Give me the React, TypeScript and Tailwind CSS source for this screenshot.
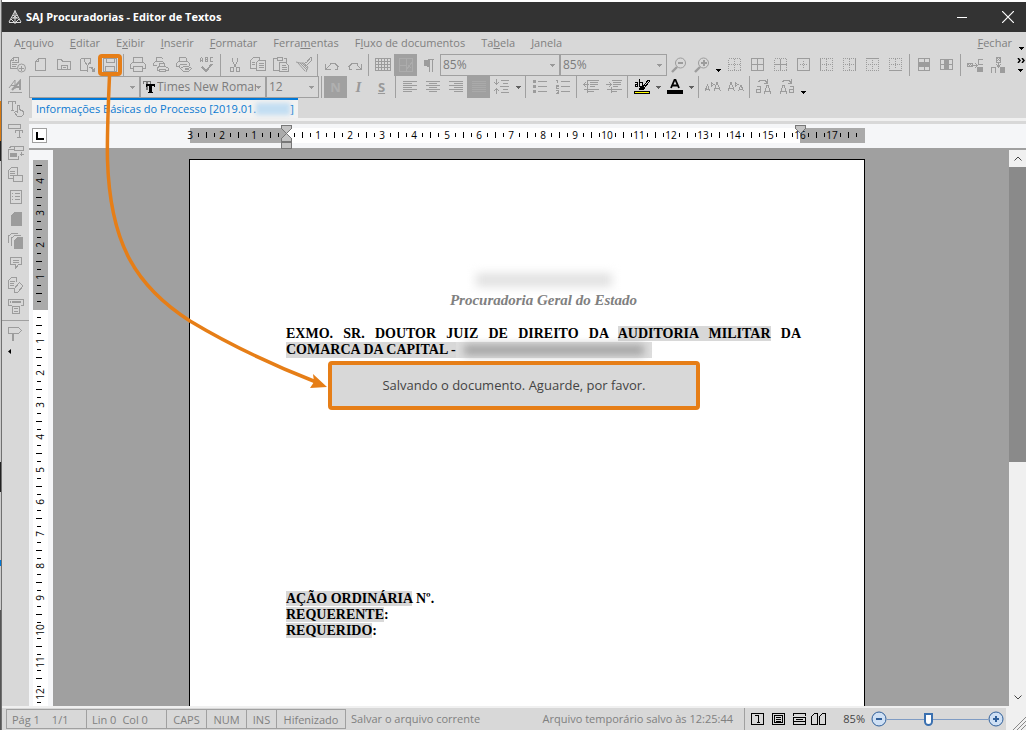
import type { ReactNode } from "react";

/* Toolbar glyphs, all on a 16 x 16 grid */
const glyphs: Record<string, ReactNode> = {
  newFrom: (
    <>
      <path d="M7 11.5H.5v-8l3-3h5v5M3.5 .5v3h-3M5 3.5h2M2 5.5h6M2 7.5h5M2 9.5h4" />
      <circle cx="11.5" cy="11" r="4" shapeRendering="auto" />
      <path d="M9 11.5h5M11.5 9v5" />
    </>
  ),
  page: <path d="M5.5 1.5h7v12h-10v-9zM5.5 1.5v3h-3" />,
  open: <path d="M1.5 12.5v-10h4l1 2h8v8h-3v-4h-6v4zM5 12.5h7M7 10.5h3" />,
  filter: <path d="M1.5 1.5h4v3l3 4v6M1.5 1.5v12h7M5.5 1.5h6v5M8.5 8.5l3-4M10 10.5h3v3M12.5 11l3 3M15.5 11v3h-3" />,
  save: <path d="M1.5 1.5h13v13h-13zM4.5 1.5v4h8v-4M3.5 14.5v-5h9v5" />,
  print: <path d="M3.5 5.5v-5h9v5M3.5 11.5h-3v-4l2-2h11l2 2v4h-3M3.5 9.5h9v5h-9z" />,
  printPage: <path d="M3.5 4.5v-4h5l2 2M3.5 8.5h-3v-2l2-2h7l2 2M6.5 9.5v-3h5v3M6.5 13.5h-2v-3l2-1h6l3 2v2h-3M6.5 12.5h6v2h-6z" />,
  printView: (
    <>
      <path d="M3.5 4.5v-4h6l1 1v3M3.5 9.5h-3v-3l2-2h9l2 2v2M3.5 7.5h7M3.5 7.5v3" />
      <path d="M4.5 11.5l3-2h5l3 2-3 3h-5zM9 11.5h3v1H9z" />
    </>
  ),
  spell: (
    <>
      <path d="M1.5 5V1.5l1-1 1 1V5M1.5 3.5h2M6.5 5V.5h2v4h-2M6.5 2.5h2M13.5 .5h-2v4h2" />
      <path d="M3 10l4 4 6-7" strokeWidth="2" />
    </>
  ),
  cut: <path d="M5.5 .5v4l4 6M10.5 .5v4l-4 6M3.5 10.5h3v4h-3zM9.5 10.5h3v4h-3z" />,
  copy: <path d="M6.5 11.5h-6v-8l3-3h6v2M2 5.5h3M2 7.5h3M6.5 5.5l2-2h7v10h-9zM8.5 6.5h5M8.5 8.5h5M8.5 10.5h5" />,
  paste: <path d="M6.5 13.5h-6v-12h4M10.5 1.5h3v4M4.5 .5h5v3h-5zM6.5 5.5h6l3 3v6h-9zM8.5 8.5h4M8.5 10.5h5M8.5 12.5h5" />,
  brush: (
    <>
      <path d="M0 5l4 1 4 0 4 4-2 5M2 6l7 8M4 6l7 7M6 6l5 5M8 6l2 3 3-3" shapeRendering="auto" />
      <path d="M8.500 5.500h2l4-5h1v3l-4 4" />
    </>
  ),
  undo: <path d="M1.5 7v5.5H7M2 12l4-4V6.500h5l3 3-1 3h-2" />,
  redo: <path d="M14.5 7v5.5H9M14 12l-4-4V6.500H5l-3 3 1 3h2" />,
  grid: <path d="M.5 1.5h15v12H.5zM.5 4.5h15M.5 7.5h15M.5 10.5h15M3.5 1.5v12M6.5 1.5v12M9.5 1.5v12M12.5 1.5v12" />,
  gridEdit: <path d="M1.5 1.5h13v13h-13zM1.5 8.5h7M8.5 1.5v13M9 12l5-7M10 8l3 3" stroke="#acacac" />,
  pilcrow: (
    <>
      <path d="M8 3H6a3 3 0 000 6h2z" fill="currentColor" />
      <path d="M8.5 2.5v12M11.5 2.5v12M7 2.5h6" />
    </>
  ),
  zoomOut: (
    <>
      <circle cx="9.5" cy="6" r="5" shapeRendering="auto" />
      <path d="M6 10l-5 5" strokeWidth="2.4" shapeRendering="auto" />
      <path d="M7 6h5" strokeWidth="2" />
    </>
  ),
  zoomIn: (
    <>
      <circle cx="9.5" cy="6" r="5" shapeRendering="auto" />
      <path d="M6 10l-5 5" strokeWidth="2.4" shapeRendering="auto" />
      <path d="M7 6h6M10 3v6" strokeWidth="2" />
    </>
  ),
  borderNone: <path d="M1.5 1.5h12v12h-12zM1.5 7.5h12M7.5 1.5v12" strokeDasharray="1 1" />,
  borderAll: <path d="M1.5 1.5h12v12h-12zM1.5 7.5h12M7.5 1.5v12" />,
  borderInner: (
    <>
      <path d="M1.5 1.5h12v12h-12z" strokeDasharray="1 1" />
      <path d="M1.5 7.5h12M7.5 1.5v12" />
    </>
  ),
  borderOuter: (
    <>
      <path d="M1.5 1.5h12v12h-12z" />
      <path d="M4 7.5h8M7.5 4v8" strokeDasharray="1 1" />
    </>
  ),
  borderLeft: (
    <>
      <path d="M3 1.5h10.5v12H3M3 7.5h10M7.5 2v12" strokeDasharray="1 1" />
      <path d="M1.5 1v13" />
    </>
  ),
  borderRight: (
    <>
      <path d="M12 1.5H1.5v12H12M1 7.5h11M7.5 2v12" strokeDasharray="1 1" />
      <path d="M13.5 1v13" />
    </>
  ),
  borderTop: (
    <>
      <path d="M1.5 3v10.5h12V3M1 7.5h12M7.5 3v11" strokeDasharray="1 1" />
      <path d="M1 1.5h13" />
    </>
  ),
  borderBottom: (
    <>
      <path d="M1.5 12V1.5h12V12M1 7.5h12M7.5 2v10" strokeDasharray="1 1" />
      <path d="M1 13.5h13" />
    </>
  ),
  rows: (
    <>
      <path d="M2.5 1.5h11v12h-11zM8.5 1v4M8.5 10v4" />
      <path d="M2 5h12v5H2z" fill="currentColor" stroke="none" />
    </>
  ),
  columns: (
    <>
      <path d="M1.5 2.5h12v10h-12zM1 7.5h4M10 7.5h4" />
      <path d="M5 2h5v11H5z" fill="currentColor" stroke="none" />
    </>
  ),
  nodeRight: (
    <>
      <path d="M.5 6.5h5v3h-5zM5 8.5h5M8 6l2 2.5L8 11M15.5 2.5h-4v5h4" />
      <path d="M1 7h1v1H1zM3 7h1v1H3zM2 8h1v1H2zM4 8h1v1H4zM10 10h6v5h-6z" fill="currentColor" stroke="none" />
    </>
  ),
  nodeDown: (
    <>
      <path d="M6.5 .5h4v5h-4zM8.5 5v5M6 7l2.5 3L11 7M1.5 15.500v-5h4v5" />
      <path d="M7 1h1v1H7zM9 1h1v1H9zM8 2h1v1H8zM7 3h1v1H7zM9 3h1v1H9zM10 10h5v6h-5z" fill="currentColor" stroke="none" />
    </>
  ),
  alignLeft: <path d="M1 2.5h14M1 4.5h9M1 6.5h14M1 8.5h9M1 10.5h14M1 12.5h9" />,
  alignCenter: <path d="M1 2.5h14M4 4.5h8M1 6.5h14M4 8.5h8M1 10.5h14M4 12.5h8" />,
  alignRight: <path d="M1 2.5h14M6 4.5h9M1 6.5h14M6 8.5h9M1 10.5h14M6 12.5h9" />,
  justify: <path d="M1 2.5h14M1 4.5h14M1 6.5h14M1 8.5h14M1 10.5h14M1 12.5h14" stroke="#aaa" />,
  spacing: <path d="M2.5 0v5M0 3l2.5 2L5 3M2.5 15v-5M0 12l2.5-2L5 12M7 1.5h8M9 4.5h5M6 7.5h9M9 10.5h5M7 13.5h8" />,
  bullets: (
    <>
      <path d="M1 1h3v3H1zM1 6h3v3H1zM1 11h3v3H1z" fill="currentColor" stroke="none" />
      <path d="M6 2.5h9M6 7.5h9M6 12.5h9" />
    </>
  ),
  numbers: <path d="M1 1.5h1.5V4M1 6h2v1.5H1.5V9H4M1 11.5h2v3H1M3 13H2M6 2.5h9M6 7.5h9M6 12.5h9" />,
  outdent: <path d="M0 5.5h6M3 3L.5 5.5 3 8M5 1.5h11M7 3.500h8M7 5.500h8M7 7.500h5M1 10.500h15M5 12.500h6M4.500 1v13" />,
  indent: <path d="M0 5.5h6M3 3l2.500 2.500L3 8M6 1.5h10M7 3.500h8M7 5.500h8M7 7.500h5M1 10.500h15M5 12.500h6M5.500 8v6" />,
  highlight: (
    <g stroke="#000">
      <path d="M1 3.5h2.5V7h-2V5.5h2M5.5 0v7h3V3.5h-3M9 8l5-7h1.500v1.500l-5 6" />
      <path d="M5 10l4-3 2 2-3 2z" fill="#000" />
      <path d="M.5 12.5h15v2H.5z" fill="#ff0" />
    </g>
  ),
  fontColor: (
    <>
      <path d="M4 9l3.5-8h1L12 9M5.5 6.5h5" stroke="#000" strokeWidth="1.8" shapeRendering="auto" />
      <path d="M0 11h16v4H0z" fill="#000" stroke="none" />
    </>
  ),
  grow: <path d="M0 12l2.500-6L5 12M1 10h3M6 3.5l3 2-3 2zM9 12l3-9 3.5 9M10 9h4" />,
  shrink: <path d="M0 12l3-9 3.5 9M1 9h4M7 3.5l3 2-3 2zM10.5 12L13 6l2.500 6M11 10h4" />,
  lower: <path d="M1 7.5h3.5V13h-4v-3h4M2 3l3-2h4l2 3M11.5 0v4.500H8M8 15l3-9h1l3 9M9 12h5" />,
  upper: <path d="M1 15l3-9h1l3 9M2 12h5M3 3l3-2h4l2 3M12.5 0v4.500H9M10.5 7.5H14V13h-4v-3h4" />,
  style: (
    <>
      <path d="M1 9l6-8v9M3 6.500h4" shapeRendering="auto" />
      <path d="M4 11l8-9v9M7 8h5" strokeWidth="2" shapeRendering="auto" />
      <path d="M2 13.500h12" />
    </>
  ),
  textHand: <path d="M.5 3V.5h7V3M4.5 1v8M3 9.5h3M9.5 11V4.500h2v4l4 2v3l-2 2h-4l-3-4 1-1z" />,
  textBox: <path d="M.5 1.5h12v4H.5zM7.5 10V7.500h7V10M11.5 8v6M9 14.5h4" />,
  fields: (
    <>
      <path d="M5.5 4.5h-5v10h10v-4M6.500 1.5h9v4h-9zM5.5 1.5h-3l-1 2M13.5 7v4M11.500 9.500h4" />
      <path d="M2 8h7v4H2z" fill="currentColor" stroke="none" />
    </>
  ),
  copyDoc: <path d="M4.5 11.5h-4v-8l3-3h6v7M2 4.5h5M2 6.5h5M2 8.5h3M5.5 8.5h9v6h-9z" />,
  list: <path d="M2.5 1.5h11v13h-11zM4 4.5h1M7 4.5h5M4 7.5h1M7 7.5h5M4 10.5h1M7 10.5h5" />,
  solid: <path d="M6 1h8v14H3V4z" fill="currentColor" stroke="none" />,
  solids: (
    <>
      <path d="M.5 10V3l3-2.500h6M3.5 13V5l3-2.500h6" />
      <path d="M9 4h6v12H6V7z" fill="currentColor" stroke="none" />
    </>
  ),
  comment: <path d="M2.5 2.5h11v7h-3l-3 4v-4h-5zM5 5.5h6M5 7.5h6" />,
  editDoc: <path d="M5.5 11.5h-5v-8l3-3h5v4M2 4.5h5M2 6.5h4M2 8.5h4M6.5 11.500l5-6 3.500 3.500-5 6H6.500z" />,
  template: (
    <>
      <path d="M3.5 6.5h-3v-6h15v6h-3M4.5 7.5h7v7h-7zM6 9.5h4M6 12.5h4" />
      <path d="M2 3h1M4 3h9" strokeWidth="2" />
    </>
  ),
  sign: <path d="M.5 1.5h10l3 3-3 3h-10zM4.5 8v7M5.500 8v7" />,
};

function Glyph({ name }: { name: string }) {
  return (
    <svg viewBox="0 0 16 16" className="size-4 shrink-0" fill="none" stroke="currentColor" shapeRendering="crispEdges" aria-hidden="true">
      {glyphs[name]}
    </svg>
  );
}

function Tool({ name, pressed }: { name: string; pressed?: boolean }) {
  return (
    <button
      type="button"
      aria-label={name}
      className={
        pressed
          ? "flex w-[23px] h-[22px] shrink-0 items-center justify-center bg-[#a0a0a0] text-[#b0b0b0]"
          : "flex w-[23px] h-[22px] shrink-0 items-center justify-center text-[#9c9c9c]"
      }
    >
      <Glyph name={name} />
    </button>
  );
}

function Separator() {
  return (
    <div className="flex w-[5px] shrink-0 justify-center">
      <div className="h-[22px] w-px bg-[#a0a0a0]" />
    </div>
  );
}

function Arrow({ dark }: { dark?: boolean }) {
  return (
    <button
      type="button"
      aria-label="Mais opções"
      className={dark ? "flex h-[22px] w-[10px] shrink-0 items-end justify-center pb-1" : "flex h-[22px] w-[10px] shrink-0 items-center justify-center"}
    >
      <svg viewBox="0 0 5 3" className="h-[3px] w-[5px]" shapeRendering="crispEdges">
        <path d="M0 0h5L2.5 3z" fill={dark ? "#000" : "#606060"} />
      </svg>
    </button>
  );
}

function Combo({ label, value, width, icon }: { label: string; value: string; width: string; icon?: boolean }) {
  return (
    <div className={`${width} flex h-[22px] shrink-0 items-center border border-[#a0a0a0] pr-1`}>
      {icon && (
        <svg viewBox="0 0 12 12" className="ml-[2px] size-3 shrink-0" shapeRendering="crispEdges">
          <path d="M0 0h8v3H7V1H5v8H3V1H1v2H0z" fill="#777" />
          <path d="M3 3h9v3h-1V5H9v6h1v1H5v-1h1V5H4v1H3z" fill="#000" />
        </svg>
      )}
      <select aria-label={label} className="min-w-0 flex-1 appearance-none overflow-hidden bg-transparent pl-[2px] text-[12px] leading-5 text-clip text-[#7c7c7c] outline-none">
        <option>{value}</option>
      </select>
      <svg viewBox="0 0 5 3" className="h-[3px] w-[5px] shrink-0" shapeRendering="crispEdges">
        <path d="M0 0h5L2.5 3z" fill="#999" />
      </svg>
    </div>
  );
}

const menus = [
  ["A", "r", "quivo"],
  ["", "E", "ditar"],
  ["E", "x", "ibir"],
  ["", "I", "nserir"],
  ["", "F", "ormatar"],
  ["Ferra", "m", "entas"],
  ["F", "l", "uxo de documentos"],
  ["Ta", "b", "ela"],
  ["", "J", "anela"],
];

const sideTools = ["style", "textHand", "textBox", "fields", "copyDoc", "list", "solid", "solids", "comment", "editDoc", "template"];

const CM = 32.1;

/* Quarter-centimetre ticks plus a number on each whole centimetre */
function RulerMarks({ from, to, origin, vertical }: { from: number; to: number; origin: number; vertical?: boolean }) {
  const marks: ReactNode[] = [];
  for (let q = from; q <= to; q++) {
    const at = Math.round(origin + (q * CM) / 4);
    if (q === 0) continue;
    if (q % 4 === 0) {
      marks.push(
        <text
          key={q}
          x={vertical ? 0 : at}
          y={vertical ? 0 : 11}
          transform={vertical ? `translate(11 ${at}) rotate(-90)` : undefined}
          textAnchor="middle"
          fontSize="10"
          fill="#000"
        >
          {Math.abs(q / 4)}
        </text>,
      );
      continue;
    }
    const long = q % 2 === 0;
    marks.push(
      vertical ? (
        <rect key={q} x={long ? 3 : 4} y={at} width={long ? 6 : 4} height="1" />
      ) : (
        <rect key={q} x={at} y={long ? 4 : 5} width="1" height={long ? 6 : 4} />
      ),
    );
  }
  return <g shapeRendering="crispEdges">{marks}</g>;
}

function HorizontalRuler() {
  return (
    <svg viewBox="0 0 680 25" className="h-[25px] w-[680px] shrink-0">
      <path d="M5 4h675v15H5z" fill="#aaa" />
      <path d="M102 4h513v15H102z" fill="#fff" />
      <g transform="translate(0 4)">
        <RulerMarks from={-12} to={71} origin={101} />
      </g>
      <g fill="#c4c4c4" stroke="#777" shapeRendering="crispEdges">
        <path d="M96.5 1.5h10v3l-5 5-5-5zM96.5 17.5v-3l5-5 5 5v3zM96.5 18.5h10v6h-10z" />
        <path d="M610.5 1.5h10v3l-5 5-5-5z" />
      </g>
    </svg>
  );
}

function VerticalRuler() {
  return (
    <svg viewBox="0 0 15 556" className="h-[556px] w-[15px] shrink-0">
      <path d="M0 10h15v150H0z" fill="#aaa" />
      <path d="M0 160h15v396H0z" fill="#fff" />
      <RulerMarks from={-18} to={49} origin={159} vertical />
    </svg>
  );
}

function TitleBar() {
  return (
    <header className="flex h-[30px] shrink-0 items-center bg-[#333] pl-[6px] text-white">
      <svg viewBox="0 0 14 14" className="size-[14px]" stroke="#ddd" fill="none">
        <path d="M7 0v14M7 1l-6 11M7 1l6 11M4 8h6M1 12.5h12M5 5l4 3M9 5l-4 3M3 9l4 4 4-4" />
      </svg>
      <h1 className="pl-[4px] text-[11px] leading-4 font-bold">SAJ Procuradorias - Editor de Textos</h1>
      <div className="ml-auto flex">
        <button type="button" aria-label="Minimizar" className="flex h-[30px] w-[56px] items-center justify-center">
          <svg viewBox="0 0 12 12" className="size-3" stroke="#fff">
            <path d="M1 6.5h10" />
          </svg>
        </button>
        <button type="button" aria-label="Fechar janela" className="flex h-[30px] w-[36px] items-center justify-center">
          <svg viewBox="0 0 12 12" className="size-3" stroke="#fff" strokeWidth="1.2">
            <path d="M0 0l12 12M12 0L0 12" />
          </svg>
        </button>
      </div>
    </header>
  );
}

function MenuBar() {
  return (
    <nav className="flex h-[22px] shrink-0 items-center gap-4 pl-[12px] text-[11px] text-[#808080]">
      {menus.map(([before, key, after]) => (
        <button type="button" key={before + key + after} className="whitespace-nowrap">
          {before}
          <u>{key}</u>
          {after}
        </button>
      ))}
      <button type="button" className="ml-auto">
        <u>F</u>echar
      </button>
      <span className="-ml-3 flex">
        <Arrow dark />
      </span>
    </nav>
  );
}

function MainToolbar() {
  return (
    <div className="flex h-[22px] shrink-0 items-center pl-1">
      <Tool name="newFrom" />
      <Tool name="page" />
      <Tool name="open" />
      <Tool name="filter" />
      <Tool name="save" />
      <Separator />
      <Tool name="print" />
      <Tool name="printPage" />
      <Tool name="printView" />
      <Tool name="spell" />
      <Separator />
      <Tool name="cut" />
      <Tool name="copy" />
      <Tool name="paste" />
      <Tool name="brush" />
      <Separator />
      <Tool name="undo" />
      <Tool name="redo" />
      <Separator />
      <Tool name="grid" />
      <Tool name="gridEdit" pressed />
      <Tool name="pilcrow" />
      <Combo label="Zoom" value="85%" width="w-[120px]" />
      <Combo label="Zoom da página" value="85%" width="w-[107px]" />
      <Tool name="zoomOut" />
      <Tool name="zoomIn" />
      <Arrow dark />
      <Tool name="borderNone" />
      <Tool name="borderAll" />
      <Tool name="borderInner" />
      <Tool name="borderOuter" />
      <Tool name="borderLeft" />
      <Tool name="borderRight" />
      <Tool name="borderTop" />
      <Tool name="borderBottom" />
      <Separator />
      <Tool name="rows" />
      <Tool name="columns" />
      <Separator />
      <Tool name="nodeRight" />
      <Tool name="nodeDown" />
      <button type="button" aria-label="Mais ferramentas" className="ml-auto flex h-[22px] w-[11px] flex-col items-center justify-center gap-[6px]">
        <svg viewBox="0 0 8 5" className="h-[5px] w-2" fill="none" stroke="#000" strokeWidth="1.5">
          <path d="M1 0l2 2.5L1 5M5 0l2 2.5L5 5" />
        </svg>
        <svg viewBox="0 0 5 3" className="h-[3px] w-[5px]" shapeRendering="crispEdges">
          <path d="M0 0h5L2.5 3z" />
        </svg>
      </button>
    </div>
  );
}

function FormatToolbar() {
  return (
    <div className="flex h-[22px] shrink-0 items-center">
      <Combo label="Estilo" value="" width="w-[111px]" />
      <Combo label="Fonte" value="Times New Roman" width="w-[126px]" icon />
      <Combo label="Tamanho" value="12" width="w-[53px]" />
      <Separator />
      <button type="button" className="h-[22px] w-[23px] bg-[#a0a0a0] text-[13px] leading-5 font-bold text-[#b0b0b0]">N</button>
      <button type="button" className="h-[22px] w-[23px] font-['Liberation_Serif',serif] text-[15px] leading-5 font-bold text-[#999] italic">I</button>
      <button type="button" className="h-[22px] w-[23px] text-[13px] leading-5 font-bold text-[#999] underline">S</button>
      <Separator />
      <Tool name="alignLeft" />
      <Tool name="alignCenter" />
      <Tool name="alignRight" />
      <Tool name="justify" pressed />
      <Tool name="spacing" />
      <Arrow />
      <Separator />
      <Tool name="bullets" />
      <Tool name="numbers" />
      <Separator />
      <Tool name="outdent" />
      <Tool name="indent" />
      <Separator />
      <Tool name="highlight" />
      <Arrow />
      <Tool name="fontColor" />
      <Arrow />
      <Separator />
      <Tool name="grow" />
      <Tool name="shrink" />
      <Separator />
      <Tool name="lower" />
      <Tool name="upper" />
      <Arrow dark />
    </div>
  );
}

function SideBar() {
  return (
    <aside className="flex w-[27px] shrink-0 flex-col items-center">
      {sideTools.map((name) => (
        <Tool key={name} name={name} />
      ))}
      <div className="my-[2px] h-px w-full bg-[#a0a0a0]" />
      <Tool name="sign" />
      <svg viewBox="0 0 3 5" className="mt-1 mr-3 h-[5px] w-[3px]">
        <path d="M3 0v5L0 2.5z" />
      </svg>
    </aside>
  );
}

function Sheet() {
  return (
    <article className="mt-[9px] ml-[136px] w-[676px] shrink-0 border-x border-t border-black bg-white pt-[108px] pr-[63px] pl-[96px] font-['Liberation_Serif',serif] text-[14px] leading-4 font-bold text-black">
      <div className="flex h-[24px] items-center justify-center">
        <div className="h-[14px] w-[136px] bg-[#e2e2e2] blur-[5px]" />
      </div>
      <p className="text-center text-[15px] leading-4 text-[#808080] italic">Procuradoria Geral do Estado</p>
      <p className="mt-[18px] [text-align-last:justify]">
        EXMO. SR. DOUTOR JUIZ DE DIREITO DA <span className="bg-[#d8d8d8]">AUDITORIA MILITAR</span> DA
      </p>
      <div className="flex items-center">
        <span className="bg-[#d8d8d8]">COMARCA DA CAPITAL -</span>
        <span className="flex h-4 w-[196px] items-center bg-[#dedede] px-2">
          <span className="h-[10px] w-full bg-[#a0a0a0] blur-[4px]" />
        </span>
      </div>
      <div className="mt-[233px]">
        <p>
          <span className="bg-[#d8d8d8]">AÇÃO ORDINÁRIA</span> Nº.
        </p>
        <p>
          <span className="bg-[#d8d8d8]">REQUERENTE</span>:
        </p>
        <p>
          <span className="bg-[#d8d8d8]">REQUERIDO</span>:
        </p>
      </div>
    </article>
  );
}

function ScrollBar() {
  return (
    <div className="flex w-[17px] shrink-0 flex-col bg-[#f0f0f0]">
      <button type="button" aria-label="Rolar para cima" className="flex h-[17px] items-center justify-center">
        <svg viewBox="0 0 8 5" className="h-[5px] w-2" fill="none" stroke="#444">
          <path d="M.5 4.5L4 1l3.5 3.5" />
        </svg>
      </button>
      <div className="h-[295px] bg-[#8a8a8a]" />
      <button type="button" aria-label="Rolar para baixo" className="mt-auto flex h-[17px] items-center justify-center">
        <svg viewBox="0 0 8 5" className="h-[5px] w-2" fill="none" stroke="#444">
          <path d="M.5.5L4 4 7.5.5" />
        </svg>
      </button>
    </div>
  );
}

function ZoomButton({ plus }: { plus?: boolean }) {
  return (
    <button type="button" aria-label={plus ? "Aumentar zoom" : "Diminuir zoom"} className="size-4 shrink-0">
      <svg viewBox="0 0 16 16" className="size-4" fill="none" stroke="#2f5f9a">
        <circle cx="8" cy="8" r="7" fill="#cfe0f4" />
        <path d={plus ? "M5 8h6M8 5v6" : "M5 8h6"} strokeWidth="2" />
      </svg>
    </button>
  );
}

function StatusBar() {
  return (
    <footer className="flex h-[24px] shrink-0 items-stretch border-t-2 border-[#f0f0f0] pl-1 text-[11px] leading-5 whitespace-nowrap text-[#808080]">
      <div className="my-px flex divide-x divide-[#a0a0a0] border border-[#a0a0a0]">
        <span className="w-[80px] pl-[5px]">
          Pág 1<span className="pl-3">1/1</span>
        </span>
        <span className="w-[80px] pl-[5px]">
          Lin 0<span className="pl-[6px]">Col 0</span>
        </span>
        <span className="w-[40px] text-center">CAPS</span>
        <span className="w-[40px] text-center">NUM</span>
        <span className="w-[30px] text-center">INS</span>
        <span className="w-[68px] text-center">Hifenizado</span>
      </div>
      <span className="pt-px pl-[5px]">Salvar o arquivo corrente</span>
      <span className="ml-auto pt-px pr-[11px]">Arquivo temporário salvo às 12:25:44</span>
      <div className="flex items-center gap-[6px] border-l border-[#a0a0a0] pl-[6px]">
        <svg viewBox="0 0 76 14" className="h-[14px] w-[76px]" fill="none" stroke="#000" shapeRendering="crispEdges">
          <path d="M.5 1.500h12v11H.5zM4 3.500h3.500v7M6 10.500h3" />
          <path d="M21.500 1.500h12v11h-12zM23.500 3.500h8v7h-8zM25 5.500h5M25 7.500h5M25 9.500h5" />
          <path d="M42.500 4V1.500h12V4M42.500 5.500h12v4h-12zM45 7.500h7M42.500 10v2.500h12V10" />
          <path d="M60.500 12.500v-8l3-3h3v11zM68.500 12.500v-8l3-3h3v11z" />
        </svg>
        <span className="w-[32px] text-right text-[11px] text-[#444]">85%</span>
        <ZoomButton />
        <input
          type="range"
          aria-label="Zoom"
          defaultValue={40}
          className="-mx-[6px] h-4 w-[101px] appearance-none bg-transparent [&::-webkit-slider-runnable-track]:h-px [&::-webkit-slider-runnable-track]:bg-[#7f9cc4] [&::-webkit-slider-thumb]:-mt-[6px] [&::-webkit-slider-thumb]:h-[13px] [&::-webkit-slider-thumb]:w-[9px] [&::-webkit-slider-thumb]:appearance-none [&::-webkit-slider-thumb]:rounded-b-full [&::-webkit-slider-thumb]:border-2 [&::-webkit-slider-thumb]:border-[#3a70b0] [&::-webkit-slider-thumb]:bg-white"
        />
        <ZoomButton plus />
      </div>
      <svg viewBox="0 0 20 22" className="ml-[2px] h-full w-5 shrink-0 bg-[#f0f0f0]" stroke="#888">
        <path d="M7 22L20 9M11 22l9-9M15 22l5-5" />
      </svg>
    </footer>
  );
}

/* Sliver of the desktop that shows beside the window */
function DesktopEdge() {
  return (
    <div className="flex w-[2px] shrink-0 flex-col border-r border-[#707070] bg-[#ccc]">
      <div className="mt-[101px] h-[40px] bg-[#d97a10]" />
      <div className="h-[20px] bg-[#222]" />
      <div className="mt-[301px] h-[30px] bg-[#222]" />
      <div className="mt-[68px] h-[6px] bg-[#0078d7]" />
      <div className="mt-[44px] flex-1 bg-[#555]" />
    </div>
  );
}

function SavingCallout() {
  return (
    <>
      <svg viewBox="0 0 340 400" className="pointer-events-none absolute top-0 left-0 h-[400px] w-[340px]" fill="none" stroke="#e67e17" strokeWidth="4">
        <rect x="100" y="56" width="20" height="18" rx="2" />
        <path d="M109.5 76C108 110 107 140 107.500 160C110 245 137 287 190 321C230 345 275 366 316 382" strokeWidth="3.5" />
        <path d="M327 387l-17 1 4-6-1-8z" fill="#e67e17" stroke="none" />
      </svg>
      <div role="status" className="absolute top-[361px] left-[328px] flex h-[49px] w-[372px] items-center justify-center rounded-[4px] border-4 border-[#e67e17] bg-[#d8d8d8] text-[13px] text-[#444]">
        Salvando o documento. Aguarde, por favor.
      </div>
    </>
  );
}

export default function App() {
  return (
    <div className="relative flex h-screen w-full overflow-hidden bg-white font-['Open_Sans','Noto_Sans',sans-serif]">
      <DesktopEdge />
      <div className="flex min-w-0 flex-1 flex-col bg-[#d8d8d8]">
        <div className="h-[2px] shrink-0 bg-white" />
        <TitleBar />
        <MenuBar />
        <MainToolbar />
        <div className="flex min-h-0 flex-1">
          <SideBar />
          <div className="flex min-w-0 flex-1 flex-col">
            <FormatToolbar />
            <div className="flex h-[20px] shrink-0 pl-[3px]">
              <a href="#processo" className="flex items-start border-t-2 border-[#0078d7] bg-[#f2f2f2] px-1 text-[11px] leading-[17px] whitespace-nowrap text-[#0b7ad1]">
                Informações Básicas do Processo [2019.01.
                <span className="mt-[3px] h-3 w-[34px] bg-[#c3def2] blur-[2px]" />]
              </a>
            </div>
            <div className="h-[6px] shrink-0 border-t-3 border-[#f0f0f0]" />
            <div className="flex h-[26px] shrink-0 items-start border-b-2 border-[#a0a0a0] bg-[#f5f6f8] pl-[3px]">
              <button type="button" aria-label="Tabulação" className="mt-1 flex size-[15px] items-center justify-center border border-[#a0a0a0] bg-white">
                <span className="size-2 border-b-2 border-l-2 border-black" />
              </button>
              <div className="pl-[138px]">
                <HorizontalRuler />
              </div>
            </div>
            <div className="flex min-h-0 flex-1 overflow-hidden bg-[#a0a0a0]">
              <div className="w-6 shrink-0 bg-[#f5f6f8] pl-1">
                <VerticalRuler />
              </div>
              <main className="flex min-w-0 flex-1 overflow-hidden">
                <Sheet />
              </main>
              <ScrollBar />
            </div>
          </div>
        </div>
        <StatusBar />
      </div>
      <SavingCallout />
    </div>
  );
}
